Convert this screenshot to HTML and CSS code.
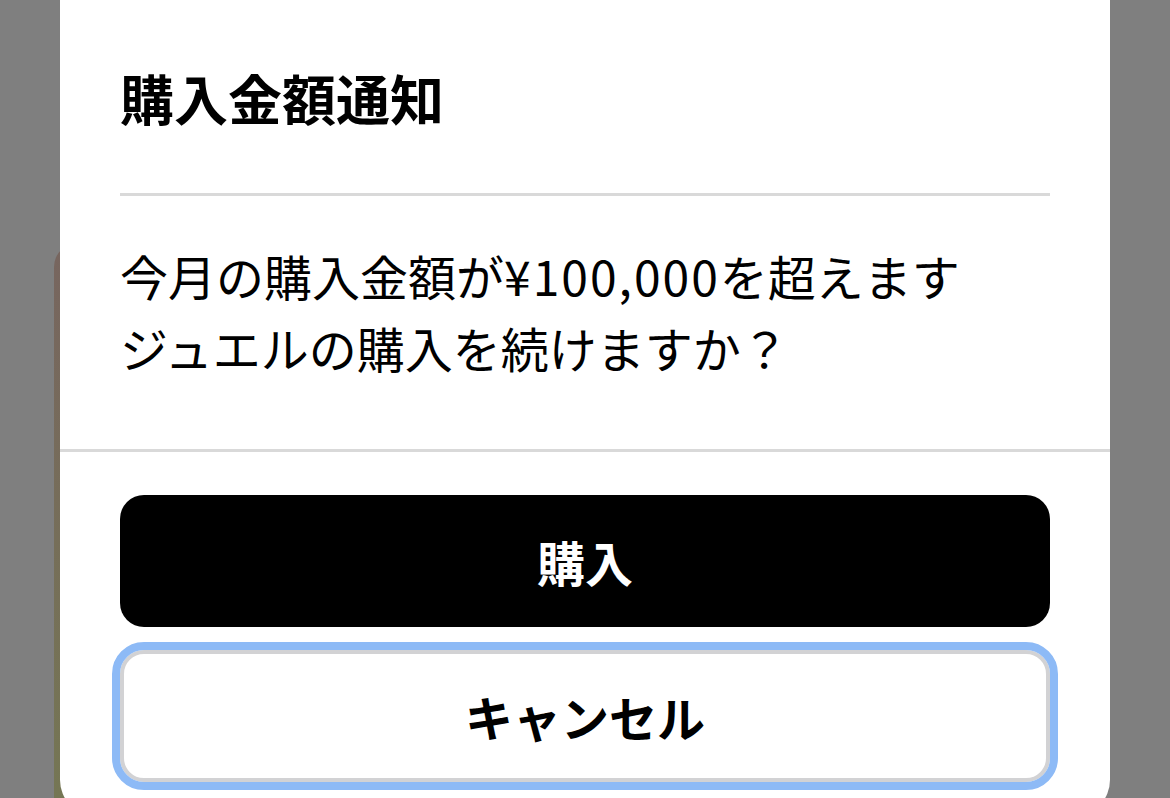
FILE: index.html
```html
<!DOCTYPE html>
<html lang="ja">
<head>
  <meta charset="UTF-8">
  <title>購入金額通知</title>
  <link rel="stylesheet" href="styles.css">
</head>
<body>
  <div class="overlay">
    <div class="bg-card"></div>

    <div class="dialog">
      <div class="dialog-header">
        <h2 class="dialog-title">購入金額通知</h2>
      </div>
      <p class="dialog-message">今月の購入金額が<span class="amount">¥100,000</span>を超えます<br>ジュエルの購入を続けますか？</p>
      <div class="dialog-actions">
        <button class="btn btn-primary">購入</button>
        <button class="btn btn-secondary">キャンセル</button>
      </div>
    </div>
  </div>
</body>
</html>
```

FILE: styles.css
```css
html, body {
  margin: 0;
  height: 100%;
  overflow: hidden;
}
body {
  font-family: "Noto Sans CJK JP", "Noto Sans", sans-serif;
  color: #000;
}
.overlay {
  position: relative;
  height: 100%;
  overflow: hidden;
  background: #7f7f7f;
  display: flex;
  justify-content: center;
  align-items: flex-start;
}
/* card of the page behind the overlay, only its edge shows */
.bg-card {
  position: absolute;
  left: 54px;
  top: 243px;
  width: 1000px;
  height: 555px;
  border-radius: 24px 24px 0 0;
  background: linear-gradient(#77655f, #757654);
}
/* the sheet is taller than the window, its bottom edge is cut off */
.dialog {
  position: relative;
  z-index: 1;
  width: 1050px;
  margin-top: -40px;
  background: #fff;
  border-radius: 36px;
  padding-bottom: 34px;
}
.dialog-header {
  margin: 0 60px;
  padding: 97px 0 55px;
  border-bottom: 3px solid #d9d9d9;
}
.dialog-title {
  margin: 0;
  font-size: 54px;
  line-height: 81px;
  font-weight: 700;
}
.dialog-message {
  margin: 43px 60px 0;
  padding-bottom: 66px;
  font-size: 48px;
  line-height: 72px;
}
.amount {
  letter-spacing: 2px;
}
.dialog-actions {
  border-top: 3px solid #d9d9d9;
  padding: 43px 60px 0;
  display: flex;
  flex-direction: column;
  gap: 23px;
}
.btn {
  height: 132px;
  border-radius: 24px;
  font-family: inherit;
  font-size: 48px;
  font-weight: 700;
  cursor: pointer;
}
.btn-primary {
  background: #000;
  color: #fff;
  border: none;
}
.btn-secondary {
  background: #fff;
  color: #000;
  border: 4px solid #d2d2d4;
  outline: 8px solid #8dbaf6;
}
```
